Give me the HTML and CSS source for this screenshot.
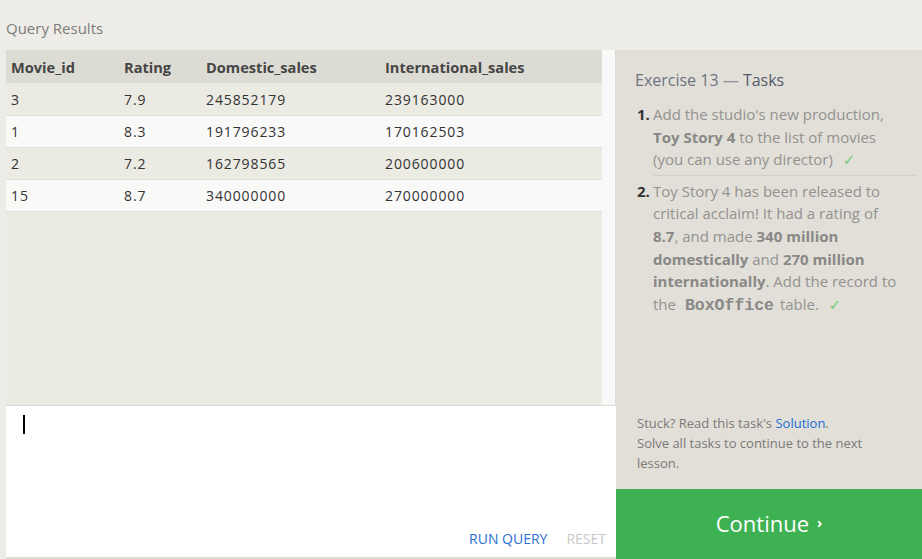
FILE: index.html
```html
<!DOCTYPE html>
<html>
<head>
<meta charset="utf-8">
<link rel="stylesheet" href="styles.css">
</head>
<body>
<div class="page">
  <div class="title">Query Results</div>
  <div class="main">
    <div class="left">
      <div class="results">
        <div class="table-area">
          <table class="grid">
            <thead>
              <tr><th class="c1">Movie_id</th><th class="c2">Rating</th><th class="c3">Domestic_sales</th><th>International_sales</th></tr>
            </thead>
            <tbody>
              <tr><td>3</td><td>7.9</td><td>245852179</td><td>239163000</td></tr>
              <tr class="alt"><td>1</td><td>8.3</td><td>191796233</td><td>170162503</td></tr>
              <tr><td>2</td><td>7.2</td><td>162798565</td><td>200600000</td></tr>
              <tr class="alt"><td>15</td><td>8.7</td><td>340000000</td><td>270000000</td></tr>
            </tbody>
          </table>
        </div>
        <div class="scrollbar"></div>
      </div>
      <div class="editor">
        <div class="cursor"></div>
        <div class="actions">
          <span class="run">RUN QUERY</span>
          <span class="reset">RESET</span>
        </div>
      </div>
    </div>
    <div class="right">
      <div class="tasks">
        <h2 class="ex-title">Exercise 13 <span class="dash">—</span> <span class="dark">Tasks</span></h2>
        <ol class="task-list">
          <li><span class="num">1.</span><div class="task-text">Add the studio's new production,<br><b>Toy Story 4</b> to the list of movies<br>(you can use any director) <span class="check">✓</span></div></li>
          <li><span class="num">2.</span><div class="task-text">Toy Story 4 has been released to<br>critical acclaim! It had a rating of<br><b>8.7</b>, and made <b>340 million</b><br><b>domestically</b> and <b>270 million</b><br><b>internationally</b>. Add the record to<br>the <code>BoxOffice</code> table. <span class="check">✓</span></div></li>
        </ol>
        <div class="hint">Stuck? Read this task's <a class="link">Solution</a>.<br>Solve all tasks to continue to the next<br>lesson.</div>
      </div>
      <div class="continue">Continue <span class="chev">›</span></div>
    </div>
  </div>
</div>
</body>
</html>
```

FILE: styles.css
```css
html, body {
  margin: 0;
  padding: 0;
}
body {
  background: #eeece6;
  font-family: "Open Sans", "DejaVu Sans", sans-serif;
  width: 922px;
  height: 559px;
  overflow: hidden;
}
.page {
  display: flex;
  flex-direction: column;
  height: 559px;
}
.title {
  height: 50px;
  box-sizing: border-box;
  padding: 18px 0 0 6px;
  font-size: 15px;
  color: #7c7c7a;
  line-height: 20px;
}
.main {
  display: flex;
  height: 509px;
}
.left {
  width: 610px;
  margin-left: 6px;
  display: flex;
  flex-direction: column;
  border-bottom: 2px solid #dddbd4;
  height: 507px;
}
.results {
  display: flex;
  height: 355px;
  border-bottom: 1px solid #dcdad3;
}
.table-area {
  width: 596px;
  background: #ebeae3;
}
.scrollbar {
  width: 13px;
  background: #f8f8f8;
  border-right: 1px solid #dddbd4;
}
.grid {
  width: 100%;
  border-collapse: collapse;
  color: #333;
}
.grid th {
  background: #dddcd4;
  text-align: left;
  font-weight: 700;
  font-size: 14.6px;
  color: #454545;
  height: 32px;
  box-sizing: border-box;
  padding: 1px 0 0 5px;
}
.grid thead tr { height: 33px; }
.grid th.c1 { width: 113px; }
.grid th.c2 { width: 82px; }
.grid th.c3 { width: 179px; }
.grid td {
  padding: 1px 0 0 5px;
  border-bottom: 1px solid #dfded8;
  font-size: 14px;
  line-height: 19px;
  letter-spacing: 0.9px;
}
.grid tbody tr { height: 32px; }
.grid tr.alt td {
  background: #f9f9f8;
}
.editor {
  flex: 1;
  background: #fff;
  display: flex;
  flex-direction: column;
  justify-content: space-between;
  padding: 9px 10px 10px 17px;
}
.cursor {
  width: 2px;
  height: 19px;
  background: #000;
}
.actions {
  display: flex;
  justify-content: flex-end;
  gap: 19px;
  font-size: 14px;
  line-height: 16px;
}
.run { color: #2a6fd3; }
.reset { color: #c8c8c8; }
.right {
  flex: 1;
  display: flex;
  flex-direction: column;
}
.tasks {
  flex: 1;
  background: #e2dfd8;
  padding: 19px 6px 0 21px;
  display: flex;
  flex-direction: column;
}
.ex-title {
  margin: 0 0 0 -2px;
  font-size: 16px;
  font-weight: 400;
  color: #6d7381;
  line-height: 22px;
}
.ex-title .dark { color: #555b68; }
.ex-title .dash { color: #8a8f99; }
.task-list {
  list-style: none;
  margin: 12px 0 0 0;
  padding: 0;
  font-size: 15px;
  line-height: 22.6px;
  color: #929290;
}
.task-list li {
  display: flex;
}
.task-list li + li {
  margin-top: 4px;
}
.task-list li:first-child .task-text {
  border-bottom: 1px solid #d3d0c7;
  padding-bottom: 4px;
}
.num {
  width: 16px;
  font-weight: 700;
  color: #333;
  flex: none;
}
.task-text {
  flex: 1;
}
.task-text b {
  color: #888886;
  font-weight: 700;
}
.task-text code {
  font-family: "Liberation Mono", "DejaVu Sans Mono", monospace;
  font-weight: 700;
  color: #888886;
  font-size: 16.5px;
  margin: 0 2px 0 5px;
}
.check {
  color: #74cc7c;
  margin-left: 6px;
}
.hint {
  margin-top: auto;
  margin-bottom: 16px;
  font-size: 13px;
  line-height: 20px;
  color: #7a7a78;
}
.link { color: #1a6ed8; }
.continue {
  height: 70px;
  box-sizing: border-box;
  padding-bottom: 3px;
  background: #3eb153;
  color: #fff;
  font-size: 22px;
  display: flex;
  align-items: center;
  justify-content: center;
  gap: 8px;
}
.chev {
  font-size: 14px;
  font-weight: 700;
}
```
